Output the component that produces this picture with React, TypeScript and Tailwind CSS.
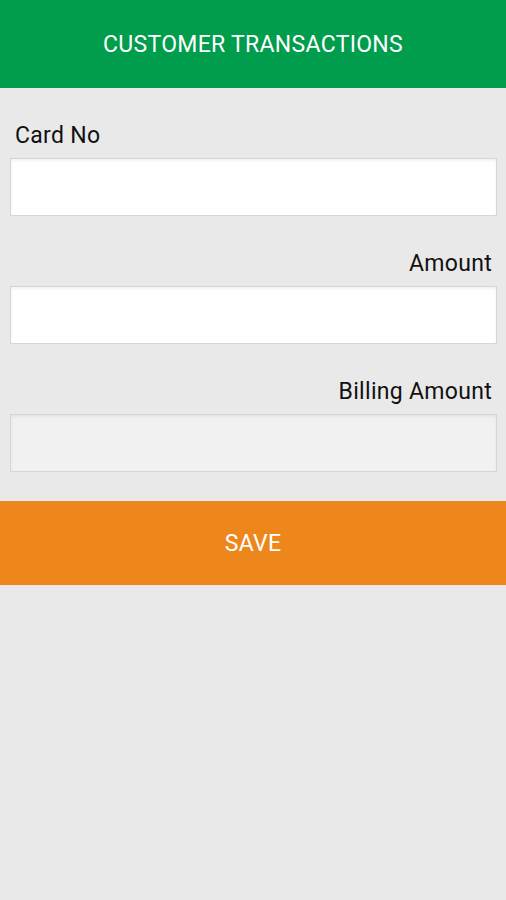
import React, { useState } from 'react';

const font = { fontFamily: 'Roboto, "Liberation Sans", sans-serif' };

const Field = ({
  label,
  align,
  value,
  onChange,
  readOnly
}: {
  label: string;
  align: 'left' | 'right';
  value: string;
  onChange?: (v: string) => void;
  readOnly?: boolean;
}) => (
  <div className="flex flex-col">
    <label
      className={`pt-[1px] text-[23px] leading-[24px] tracking-[0.3px] text-[#111] ${
        align === 'right' ? 'text-right pr-[14px]' : 'text-left pl-[15px]'
      }`}
    >
      {label}
    </label>
    <input
      type="text"
      value={value}
      readOnly={readOnly}
      onChange={(e) => onChange?.(e.target.value)}
      className={`mt-[10px] ml-[10px] mr-[9px] h-[58px] border border-[#d5d5d5] px-3 text-[20px] outline-none shadow-[inset_0_2px_3px_rgba(0,0,0,0.06)] ${
        readOnly ? 'bg-[#f1f1f1]' : 'bg-white'
      }`}
    />
  </div>
);

export default function App() {
  const [cardNo, setCardNo] = useState('');
  const [amount, setAmount] = useState('');

  return (
    <div className="min-h-[900px] w-full bg-[#e9e9e9]" style={font}>
      {/* header */}
      <div className="flex h-[88px] items-center justify-center bg-[#009d4c] pt-[3px]">
        <h1 className="text-[23px] tracking-[0.3px] text-white">CUSTOMER TRANSACTIONS</h1>
      </div>

      <div className="flex flex-col gap-[35px] pt-[35px]">
        <Field label="Card No" align="left" value={cardNo} onChange={setCardNo} />
        <Field label="Amount" align="right" value={amount} onChange={setAmount} />
        <Field label="Billing Amount" align="right" value="" readOnly />
      </div>

      <button
        type="button"
        className="mt-[29px] flex h-[84px] w-full items-center justify-center bg-[#ee871b] pt-[3px] text-[23px] tracking-[0.3px] text-white"
      >
        SAVE
      </button>
    </div>
  );
}
